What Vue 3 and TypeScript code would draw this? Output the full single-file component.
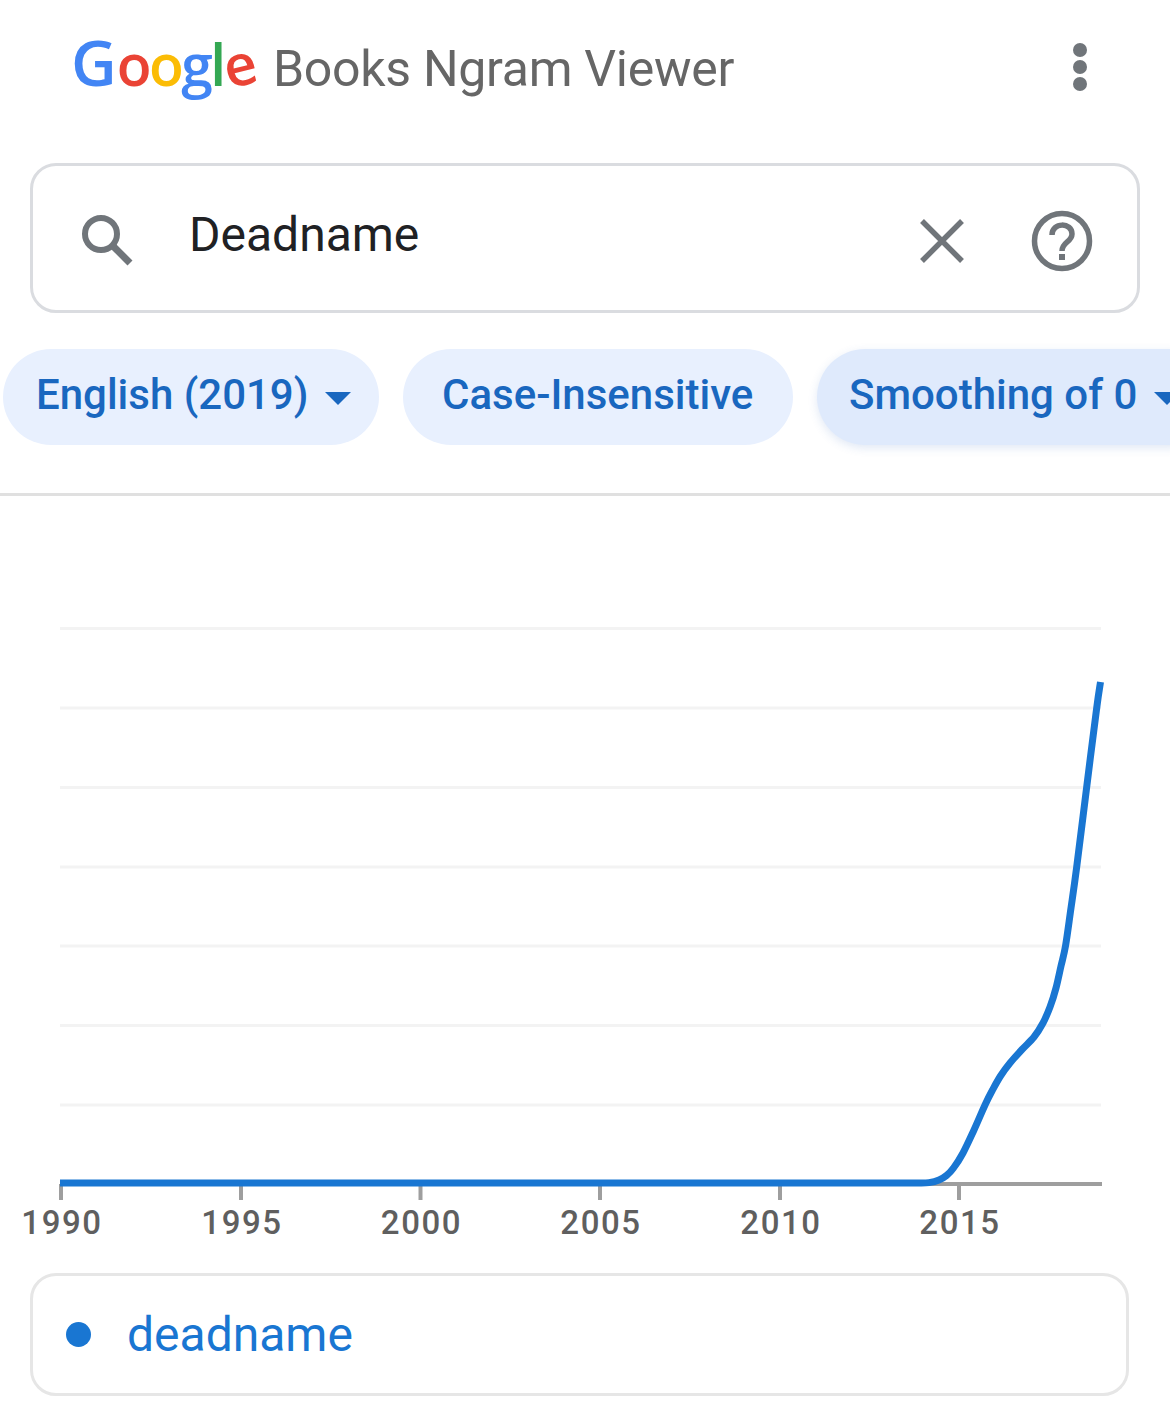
<script setup lang="ts">
const gridLines: number[] = [628.5, 708, 787.5, 867, 946, 1025.5, 1105];
const ticks: { x: number; label: string }[] = [
  { x: 61, label: '1990' },
  { x: 241, label: '1995' },
  { x: 420.5, label: '2000' },
  { x: 600, label: '2005' },
  { x: 780, label: '2010' },
  { x: 959, label: '2015' },
];
const pts: [number, number][] = [
  [905, 1183], [918, 1183], [929, 1182.6], [939, 1180], [946.5, 1175.5], [953.5, 1168], [963, 1153], [974, 1130], [985, 1105],
  [992.5, 1090], [1000.5, 1076], [1010, 1063], [1022, 1049.5], [1034, 1037], [1043, 1023], [1050, 1007], [1056, 988], [1061, 966],
  [1065.5, 946], [1071, 908], [1076.7, 867], [1086.7, 787], [1096.7, 708], [1100.5, 682],
];
function smooth(p: [number, number][]): string {
  let d = `M60 1183L${p[0][0]} ${p[0][1]}`;
  for (let i = 0; i < p.length - 1; i++) {
    const a = p[Math.max(i - 1, 0)], b = p[i], c = p[i + 1], e = p[Math.min(i + 2, p.length - 1)];
    const c1x = b[0] + (c[0] - a[0]) / 6;
    const c1y = b[1] + (c[1] - a[1]) / 6;
    d += `C${c1x.toFixed(1)} ${c1y.toFixed(1)} ${(c[0] - (e[0] - b[0]) / 6).toFixed(1)} ${(c[1] - (e[1] - b[1]) / 6).toFixed(1)} ${c[0]} ${c[1]}`;
  }
  return d;
}
const curve = smooth(pts);
</script>

<template>
  <div class="page">
    <header class="top">
      <div class="brand">
        <span class="logo"><span class="blue cap">G</span><span class="red">o</span><span class="yellow">o</span><span class="blue">g</span><span class="green">l</span><span class="red tilt">e</span></span>
        <span class="title">Books Ngram Viewer</span>
      </div>
      <div class="menu"><i></i><i></i><i></i></div>
    </header>

    <div class="search">
      <svg class="ic-search" viewBox="0 0 56 56" width="56" height="56">
        <circle cx="23" cy="23" r="16" fill="none" stroke="#70757a" stroke-width="6" />
        <path d="M35 35 L52 52" stroke="#70757a" stroke-width="7" fill="none" />
      </svg>
      <span class="query">Deadname</span>
      <svg class="ic-clear" viewBox="0 0 46 46" width="46" height="46">
        <path d="M3 3 L43 43 M43 3 L3 43" stroke="#70757a" stroke-width="5.5" fill="none" />
      </svg>
      <svg class="ic-help" viewBox="0 0 62 62" width="62" height="62">
        <circle cx="31" cy="31" r="27.5" fill="none" stroke="#70757a" stroke-width="5.5" />
        <path d="M21 25 C21 12 41 12 41 24 C41 32 31 32 31 41" fill="none" stroke="#70757a" stroke-width="5.5" />
        <rect x="28" y="44" width="6" height="6" fill="#70757a" />
      </svg>
    </div>

    <div class="chips">
      <div class="chip first">English (2019)<span class="caret"></span></div>
      <div class="chip second">Case-Insensitive</div>
      <div class="chip third">Smoothing of 0<span class="caret"></span></div>
    </div>
    <div class="divider"></div>

    <svg class="chart" viewBox="0 496 1170 770" width="1170" height="770">
      <line v-for="y in gridLines" :key="y" x1="60" x2="1101" :y1="y" :y2="y" stroke="#f3f3f3" stroke-width="3" />
      <line x1="60" x2="1102" y1="1184" y2="1184" stroke="#9e9e9e" stroke-width="4" />
      <g v-for="t in ticks" :key="t.label">
        <line :x1="t.x" :x2="t.x" y1="1184" y2="1200" stroke="#9e9e9e" stroke-width="4" />
        <text :x="t.x + 1" y="1234" text-anchor="middle" class="tick">{{ t.label }}</text>
      </g>
      <path :d="curve" fill="none" stroke="#1976d2" stroke-width="7" />
    </svg>

    <div class="legend">
      <span class="dot"></span>
      <span class="term">deadname</span>
    </div>
  </div>
</template>

<style scoped>
.page {
  width: 1170px;
  height: 1418px;
  overflow: hidden;
  background: #fff;
  font-family: Roboto, "Liberation Sans", sans-serif;
}
.top {
  height: 135px;
  display: flex;
  align-items: flex-start;
  justify-content: space-between;
  padding: 0 83px 0 73px;
  box-sizing: border-box;
}
.brand {
  display: flex;
  align-items: baseline;
  gap: 16px;
  padding-top: 26px;
}
.logo {
  flex: none;
  width: 185px;
  white-space: nowrap;
  font-family: "Open Sans", sans-serif;
  font-size: 57px;
  font-weight: 600;
  line-height: 72px;
  letter-spacing: -2.6px;
}
.cap {
  font-size: 63px;
  font-weight: 600;
  letter-spacing: 0;
  margin-left: -2px;
}
.tilt {
  display: inline-block;
  transform: rotate(-14deg);
}
.blue { color: #4285f4; }
.red { color: #ea4335; }
.yellow { color: #fbbc05; }
.green { color: #34a853; }
.title {
  font-family: Roboto, sans-serif;
  font-size: 50px;
  color: #666666;
  letter-spacing: -0.3px;
  margin-left: -1px;
}
.menu {
  display: flex;
  flex-direction: column;
  gap: 3px;
  padding-top: 43px;
}
.menu i {
  display: block;
  width: 14px;
  height: 14px;
  border-radius: 50%;
  background: #70757a;
}
.search {
  margin: 28px 30px 0;
  height: 150px;
  box-sizing: border-box;
  border: 3px solid #dadce0;
  border-radius: 26px;
  display: flex;
  align-items: center;
  padding: 0 44px 0 45px;
}
.ic-search { flex: none; margin-top: 2px; }
.query {
  flex: 1;
  margin-left: 55px;
  margin-top: -7px;
  font-size: 48px;
  color: #202124;
}
.ic-clear { flex: none; margin-right: 66px; margin-top: 5px; }
.ic-help { flex: none; margin-top: 5px; }
.chips {
  display: flex;
  gap: 24px;
  padding: 36px 0 0 3px;
  height: 96px;
}
.chip {
  flex: none;
  height: 96px;
  border-radius: 48px;
  background: #e8f0fe;
  color: #1967bf;
  font-size: 42px;
  font-weight: 500;
  display: flex;
  align-items: center;
  box-sizing: border-box;
  padding-bottom: 6px;
}
.first { width: 376px; padding-left: 33px; }
.second { width: 390px; padding-left: 39px; }
.third {
  width: 400px;
  padding-left: 32px;
  background: #dfeafc;
  box-shadow: 0 3px 10px rgba(60, 110, 190, 0.16);
}
.caret {
  margin-left: 17px;
  margin-top: 8px;
  border-left: 13px solid transparent;
  border-right: 13px solid transparent;
  border-top: 13px solid #1967bf;
}
.divider {
  margin-top: 48px;
  height: 3px;
  background: #e0e0e0;
}
.chart { display: block; }
.tick {
  font-family: Roboto, sans-serif;
  font-size: 33px;
  font-weight: 500;
  fill: #5f5f5f;
  letter-spacing: 1.6px;
}
.legend {
  margin: 7px 0 0 30px;
  width: 1099px;
  height: 123px;
  box-sizing: border-box;
  border: 3px solid #e6e6e6;
  border-radius: 26px;
  display: flex;
  align-items: center;
  padding-left: 33px;
}
.dot {
  width: 25px;
  height: 25px;
  border-radius: 50%;
  background: #1976d2;
}
.term {
  margin-left: 36px;
  font-size: 48px;
  color: #1976d2;
}
</style>
<style>
html, body { margin: 0; background: #fff; }
</style>
